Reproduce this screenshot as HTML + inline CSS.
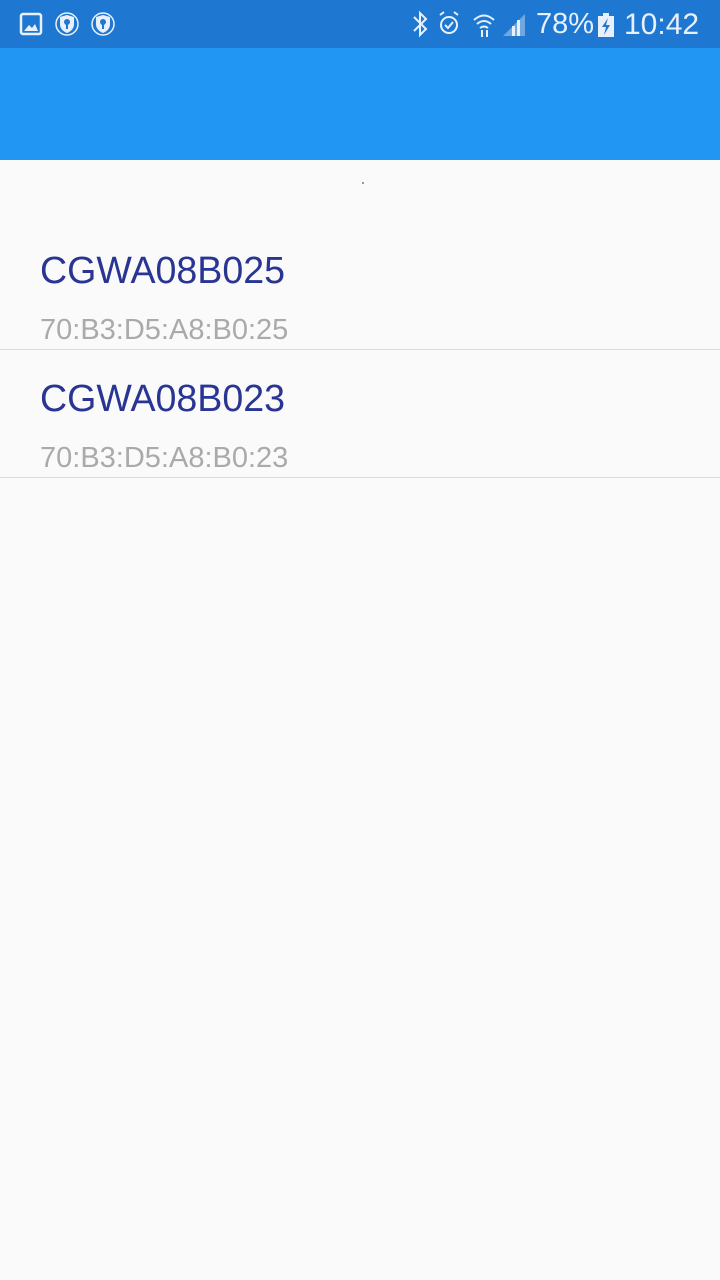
<!DOCTYPE html>
<html><head><style>
body{margin:0;width:720px;height:1280px;background:#fafafa;font-family:"Liberation Sans",sans-serif;position:relative;overflow:hidden}
.sb{position:absolute;top:0;left:0;width:720px;height:48px;background:#1e78d2;color:#e8f1fb}
.ab{position:absolute;top:48px;left:0;width:720px;height:112px;background:#2196f3}
.t{position:absolute;left:40px;color:#283593;font-size:37.6px;line-height:1}
.s{position:absolute;left:40px;color:#aaaaaa;font-size:29px;line-height:1}
.hr{position:absolute;left:0;width:720px;height:1px;background:#dcdcdc}
</style></head><body>
<div class="sb">
<svg width="720" height="48" style="position:absolute;left:0;top:0">
<rect x="21" y="14" width="20" height="20" rx="2" fill="none" stroke="#e8f1fb" stroke-width="2.5"/>
<path d="M24 31 L29 25 L32 28 L35 24 L38 31Z" fill="#e8f1fb"/>
<circle cx="67" cy="24" r="11" fill="none" stroke="#e8f1fb" stroke-width="1.5"/>
<path d="M60 17 L67 15 L74 17 V24 Q74 30 67 33 Q60 30 60 24Z" fill="#e8f1fb"/>
<circle cx="67" cy="22" r="3" fill="#1e78d2"/><rect x="66" y="23" width="2" height="6" fill="#1e78d2"/>
<circle cx="103" cy="24" r="11" fill="none" stroke="#e8f1fb" stroke-width="1.5"/>
<path d="M96 17 L103 15 L110 17 V24 Q110 30 103 33 Q96 30 96 24Z" fill="#e8f1fb"/>
<circle cx="103" cy="22" r="3" fill="#1e78d2"/><rect x="102" y="23" width="2" height="6" fill="#1e78d2"/>
<path d="M414 17 L426 29 L420 35 V13 L426 19 L414 31" fill="none" stroke="#e8f1fb" stroke-width="2"/>
<circle cx="449" cy="25" r="8" fill="none" stroke="#e8f1fb" stroke-width="2"/>
<path d="M445 25 L448 28 L453 22 M440 15 L444 12 M458 15 L454 12" fill="none" stroke="#e8f1fb" stroke-width="2"/>
<path d="M474 20 Q484 11 494 20 M477 24 Q484 18 491 24 M480 28 Q484 25 488 28" fill="none" stroke="#e8f1fb" stroke-width="2"/>
<path d="M482 30 V37 M487 30 V37" stroke="#e8f1fb" stroke-width="2"/>
<path d="M503 36 L525 14 V36Z" fill="#6fa8e0"/><rect x="512" y="26" width="3" height="10" fill="#e8f1fb"/><rect x="517" y="20" width="3" height="16" fill="#e8f1fb"/>
<rect x="598" y="16" width="16" height="21" fill="#e8f1fb"/><rect x="603" y="13" width="6" height="3" fill="#e8f1fb"/>
<path d="M608 18 L602 27 H606 L604 35 L610 25 H606Z" fill="#1e78d2"/>
</svg>
<div style="position:absolute;left:536px;top:8px;font-size:29px">78%</div>
<div style="position:absolute;left:624px;top:8px;font-size:30px">10:42</div>
</div>
<div class="ab"></div>
<div style="position:absolute;left:362px;top:182px;width:2px;height:2px;background:#999"></div>
<div class="t" style="top:252px">CGWA08B025</div>
<div class="s" style="top:316px">70:B3:D5:A8:B0:25</div>
<div class="hr" style="top:349px"></div>
<div class="t" style="top:380px">CGWA08B023</div>
<div class="s" style="top:444px">70:B3:D5:A8:B0:23</div>
<div class="hr" style="top:477px"></div>
</body></html>
